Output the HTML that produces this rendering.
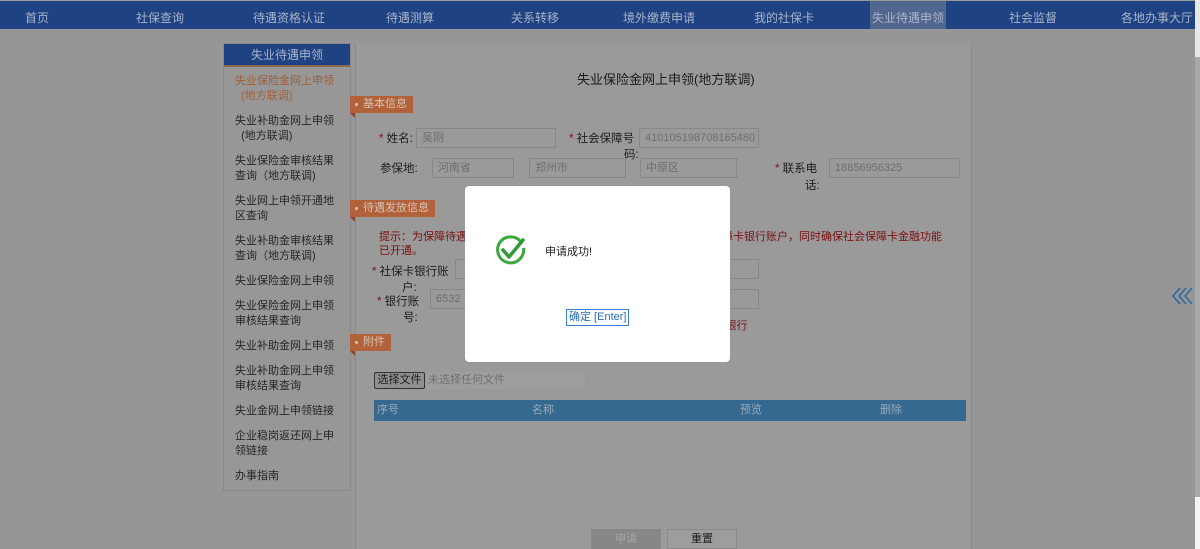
<!DOCTYPE html>
<html><head><meta charset="utf-8"><style>
*{margin:0;padding:0;box-sizing:border-box}
html,body{background:#969696}
body{width:1200px;height:549px;overflow:hidden;font-family:"Liberation Sans","Noto Sans CJK SC",sans-serif;font-size:11px;color:#1e1e1e;position:relative}
.a{position:absolute;white-space:nowrap}
.nav{left:0;top:0;width:1195px;height:29px;background:#1f4282;border-top:1px solid #9a9a9a}
.nav span{position:absolute;top:8px;color:#a8b3c9;font-size:12px;transform:translateX(-50%)}
.inp{position:absolute;height:20px;background:#9a9a9a;border:1px solid #878787;color:#6e6e6e;font-size:11px;padding:2px 5px;line-height:15px}
.tag{position:absolute;height:17px;background:#b1623a;color:#d9c2b4;font-size:11px;line-height:17px;padding:0 6px 0 13px}
.tag:before{content:"";position:absolute;left:5px;top:7px;width:3px;height:3px;background:#d9c2b4;border-radius:50%}
.tag:after{content:"";position:absolute;left:0;top:17px;border-top:5px solid #8a4a2a;border-left:5px solid transparent}
.side div{position:absolute;left:11px;font-size:11px;line-height:15px;color:#262626}
.red{color:#7a1010}
.lb{font-size:11.5px}
</style></head><body>
<div class="a nav">
<span style="left:37px">首页</span><span style="left:160px">社保查询</span><span style="left:289px">待遇资格认证</span><span style="left:410px">待遇测算</span><span style="left:535px">关系转移</span><span style="left:659px">境外缴费申请</span><span style="left:784px">我的社保卡</span>
<div style="position:absolute;left:870px;top:0;width:76px;height:28px;background:#52678f"></div>
<span style="left:908px">失业待遇申领</span><span style="left:1033px">社会监督</span><span style="left:1157px">各地办事大厅</span>
</div>
<div class="a" style="left:1195px;top:0;width:5px;height:57px;background:#e8e8e8"></div>
<div class="a" style="left:1195px;top:57px;width:5px;height:440px;background:#a8a8a8"></div>
<div class="a" style="left:1195px;top:497px;width:5px;height:52px;background:#f4f4f4"></div>
<div class="a side" style="left:223px;top:43px;width:128px;height:448px;border:1px solid #8a8a8a;background:#979797">
<div style="left:0;top:0;width:126px;height:23px;background:#1f4282;border-bottom:2px solid #8a6a4a"></div>
<div style="left:0;top:4px;width:126px;text-align:center;color:#a8b3c9;font-size:12px">失业待遇申领</div>
<div style="top:30px;color:#a0603a">失业保险金网上申领<br>&nbsp;&nbsp;(地方联调)</div>
<div style="top:70px">失业补助金网上申领<br>&nbsp;&nbsp;(地方联调)</div>
<div style="top:110px">失业保险金审核结果<br>查询（地方联调)</div>
<div style="top:150px">失业网上申领开通地<br>区查询</div>
<div style="top:190px">失业补助金审核结果<br>查询（地方联调)</div>
<div style="top:230px">失业保险金网上申领</div>
<div style="top:255px">失业保险金网上申领<br>审核结果查询</div>
<div style="top:295px">失业补助金网上申领</div>
<div style="top:320px">失业补助金网上申领<br>审核结果查询</div>
<div style="top:360px">失业金网上申领链接</div>
<div style="top:385px">企业稳岗返还网上申<br>领链接</div>
<div style="top:425px">办事指南</div>
</div>
<div class="a" style="left:355px;top:43px;width:617px;height:506px;background:#9a9a9a;border-left:1px solid #8a8a8a;border-right:1px solid #8a8a8a"></div>
<div class="a" style="left:577px;top:69px;font-size:13px;color:#1a1a1a">失业保险金网上申领(地方联调)</div>
<div class="tag" style="left:350px;top:96px">基本信息</div>
<div class="a lb" style="left:379px;top:130px"><span class="red">*</span> 姓名:</div>
<div class="inp" style="left:416px;top:128px;width:140px">吴刚</div>
<div class="a lb" style="left:569px;top:130px"><span class="red">*</span> 社会保障号</div>
<div class="a lb" style="left:624px;top:146px">码:</div>
<div class="inp" style="left:639px;top:128px;width:120px">410105198708165480</div>
<div class="a lb" style="left:380px;top:160px">参保地:</div>
<div class="inp" style="left:432px;top:158px;width:82px">河南省</div>
<div class="inp" style="left:529px;top:158px;width:97px">郑州市</div>
<div class="inp" style="left:640px;top:158px;width:97px">中原区</div>
<div class="a lb" style="left:775px;top:160px"><span class="red">*</span> 联系电</div>
<div class="a lb" style="left:805px;top:177px">话:</div>
<div class="inp" style="left:829px;top:158px;width:131px">18856956325</div>
<div class="tag" style="left:350px;top:200px">待遇发放信息</div>
<div class="a red" style="left:379px;top:228px">提示：为保障待遇</div>
<div class="a red" style="left:700px;top:228px">会保障卡银行账户，同时确保社会保障卡金融功能</div>
<div class="a red" style="left:379px;top:242px">已开通。</div>
<div class="a lb" style="left:372px;top:263px"><span class="red">*</span> 社保卡银行账</div>
<div class="a lb" style="left:402px;top:279px">户:</div>
<div class="inp" style="left:455px;top:259px;width:304px"></div>
<div class="a lb" style="left:377px;top:293px"><span class="red">*</span> 银行账</div>
<div class="a lb" style="left:403px;top:309px">号:</div>
<div class="inp" style="left:430px;top:289px;width:329px">6532</div>
<div class="a red" style="left:720px;top:317px">x银行</div>
<div class="tag" style="left:350px;top:334px">附件</div>
<div class="a" style="left:374px;top:372px;width:51px;height:17px;border:1px solid #333;background:#8f8f8f;border-radius:2px;font-size:11px;text-align:center;line-height:15px">选择文件</div>
<div class="a" style="left:426px;top:372px;width:159px;height:17px;background:#9e9e9e;color:#707070;padding-left:2px;line-height:17px">未选择任何文件</div>
<div class="a" style="left:374px;top:400px;width:592px;height:21px;background:#36698f;color:#95a9bd;line-height:21px">
<span style="position:absolute;left:3px">序号</span><span style="position:absolute;left:158px">名称</span><span style="position:absolute;left:366px">预览</span><span style="position:absolute;left:506px">删除</span></div>
<div class="a" style="left:591px;top:529px;width:70px;height:20px;background:#878787;color:#a5a5a5;text-align:center;line-height:20px">申请</div>
<div class="a" style="left:667px;top:529px;width:70px;height:20px;border:1px solid #8a8a8a;background:#9d9d9d;text-align:center;line-height:18px">重置</div>
<svg class="a" style="left:1172px;top:287px" width="24" height="18" viewBox="0 0 24 18"><path d="M8 1L1 9l7 8M14 1L7 9l7 8M20 1l-7 8 7 8" fill="none" stroke="#2c6aa0" stroke-width="1.6"/></svg>
<div class="a" style="left:465px;top:186px;width:265px;height:176px;background:#fff;border-radius:4px"></div>
<svg class="a" style="left:494px;top:234px" width="34" height="34" viewBox="0 0 34 34"><path d="M27 8A13 13 0 1 0 29.5 14" fill="none" stroke="#3aa83c" stroke-width="3"/><path d="M9 16l6 7L29 6" fill="none" stroke="#2f9a34" stroke-width="3.5" stroke-linecap="round" stroke-linejoin="round"/></svg>
<div class="a" style="left:545px;top:243px;font-size:11px;color:#222">申请成功!</div>
<div class="a" style="left:566px;top:309px;height:17px;padding:0 2px;border:1px solid #3a7fcf;color:#2b6cb3;font-size:11px;line-height:15px">确定 [Enter]</div>
</body></html>
